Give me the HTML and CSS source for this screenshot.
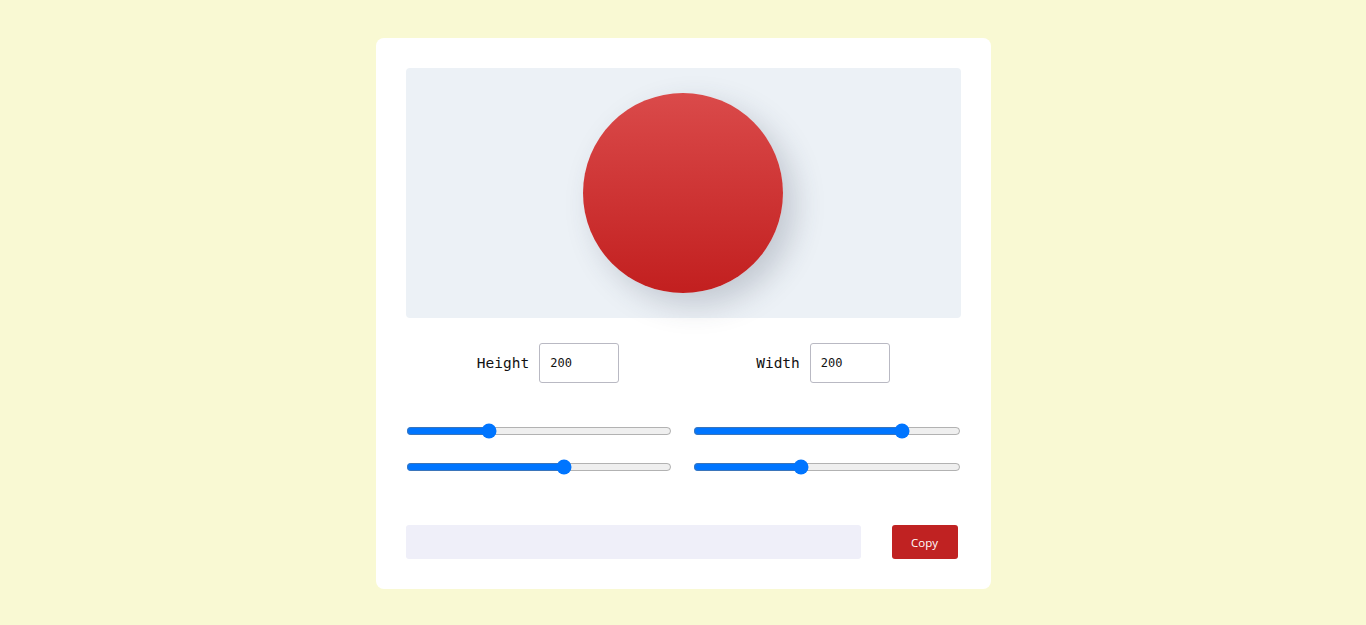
FILE: index.html
```html
<!DOCTYPE html>
<html>
<head>
<meta charset="utf-8">
<link rel="stylesheet" href="styles.css">
</head>
<body>
<div class="card">
  <div class="preview">
    <div class="shape"></div>
  </div>
  <div class="dims">
    <div class="dim"><label class="dim-label">Height</label><input class="dim-input" type="text" value="200"></div>
    <div class="dim"><label class="dim-label">Width</label><input class="dim-input" type="text" value="200"></div>
  </div>
  <div class="sliders">
    <input class="slider" type="range" min="0" max="100" value="30">
    <input class="slider" type="range" min="0" max="100" value="80">
    <input class="slider" type="range" min="0" max="100" value="60">
    <input class="slider" type="range" min="0" max="100" value="40">
  </div>
  <div class="output">
    <input class="code" type="text" readonly>
    <button class="copy">Copy</button>
  </div>
</div>
</body>
</html>
```
FILE: styles.css
```css
html, body {
  margin: 0;
  padding: 0;
}
body {
  background: #f9f9d3;
  font-family: "Open Sans", "Liberation Sans", sans-serif;
  min-height: 625px;
}
.card {
  box-sizing: border-box;
  width: 615px;
  margin: 38px auto 0;
  background: #ffffff;
  border-radius: 8px;
  padding: 30px 30px 30px 30px;
}
.preview {
  height: 250px;
  background: #ecf1f6;
  border-radius: 4px;
  display: flex;
  align-items: center;
  justify-content: center;
}
.shape {
  width: 200px;
  height: 200px;
  border-radius: 50%;
  background: linear-gradient(to bottom, #da4a4a, #c21f1f);
  box-shadow: 12px 12px 30px rgba(50, 60, 80, 0.22);
}
.dims {
  display: grid;
  grid-template-columns: 1fr 1fr;
  margin-top: 25px;
  padding-left: 5px;
}
.dim {
  display: flex;
  align-items: center;
  justify-content: center;
  gap: 10px;
}
.dim-label {
  font-family: "DejaVu Sans Mono", "Liberation Mono", monospace;
  font-size: 14.5px;
  color: #111;
}
.dim-input {
  box-sizing: border-box;
  width: 80px;
  height: 40px;
  border: 1px solid #b9b9c3;
  border-radius: 3px;
  padding: 0 10px;
  font-family: "DejaVu Sans Mono", "Liberation Mono", monospace;
  font-size: 12px;
  color: #111;
  margin: 0;
}
.sliders {
  display: grid;
  grid-template-columns: 266px 268px;
  justify-content: space-between;
  row-gap: 20px;
  margin-top: 40px;
}
.slider {
  width: 100%;
  margin: 0;
  height: 16px;
  accent-color: #0075ff;
}
.output {
  display: flex;
  justify-content: space-between;
  align-items: center;
  margin-top: 50px;
}
.code {
  box-sizing: border-box;
  width: 455px;
  height: 34px;
  background: #efeff9;
  border: none;
  border-radius: 3px;
  margin: 0;
}
.copy {
  box-sizing: border-box;
  width: 66px;
  height: 34px;
  margin-right: 3px;
  background: #c02222;
  color: #fff;
  border: none;
  border-radius: 3px;
  font-family: "Open Sans", "Liberation Sans", sans-serif;
  font-size: 11.5px;
  font-weight: 500;
}
```
